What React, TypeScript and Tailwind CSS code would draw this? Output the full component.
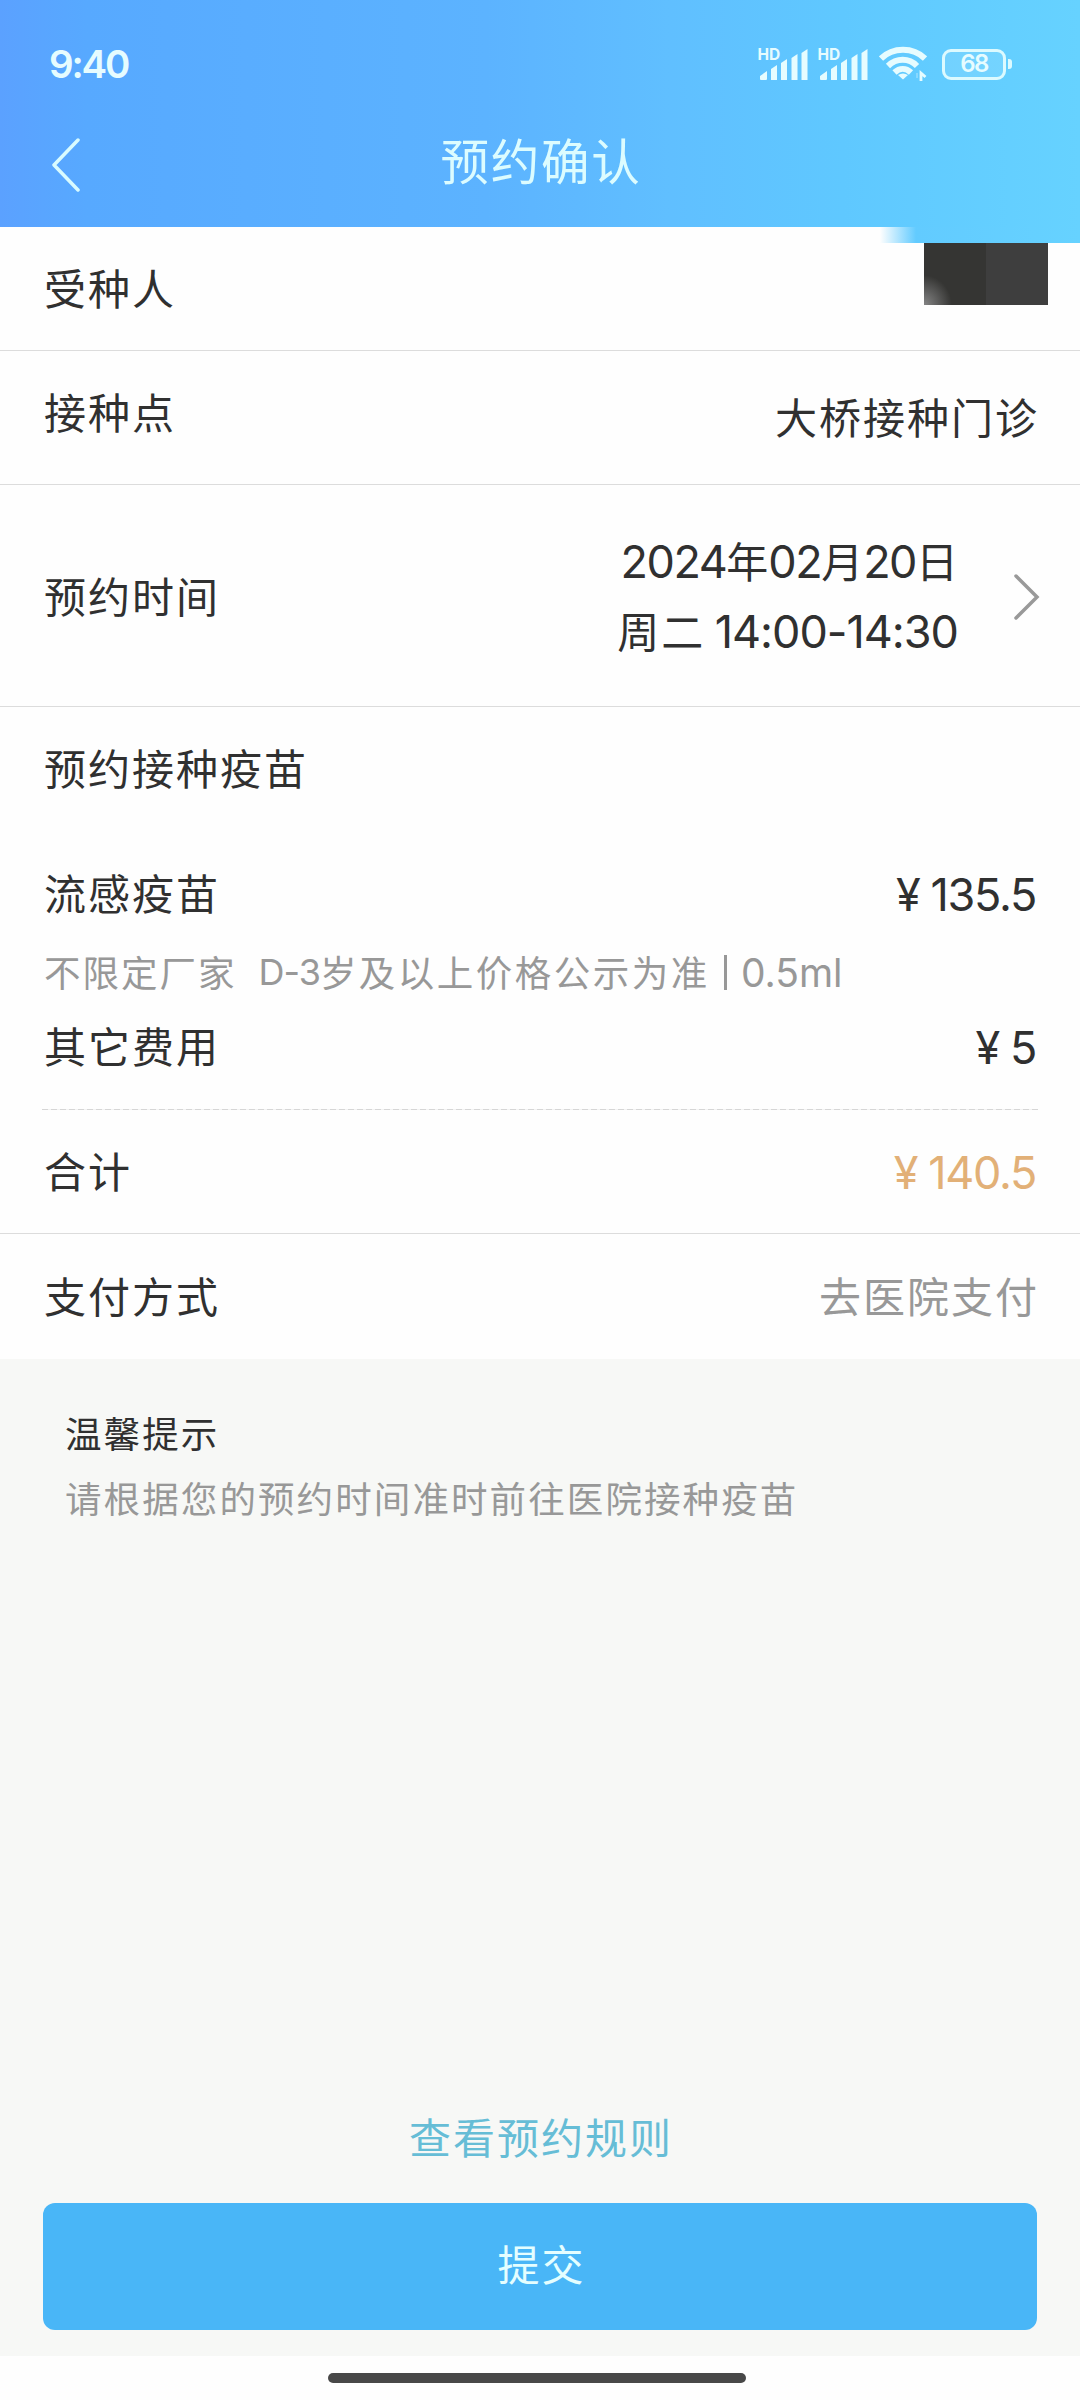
import type { ReactNode } from "react";

function Num({ children, className = "" }: { children: ReactNode; className?: string }) {
  return <span className={`font-[Inter] leading-none ${className}`}>{children}</span>;
}

function Signal() {
  return (
    <svg className="-mt-[6px] -mr-px -ml-[2px]" width="54" height="40" viewBox="-2 -6 54 40" fill="#e6fcff">
      <text x="-0.5" y="12.500" fontFamily="Inter" fontWeight="700" fontSize="15.5">HD</text>
      <path d="M2 32v-3l7-5v8a1 1 0 0 1-1 1H3a1 1 0 0 1-1-1zM13 33V22l6-4v15zM23 33V16l6-4v21zM33.500 33V11l6-4v26zM43.500 33V6l6-4v31z" />
    </svg>
  );
}

function Wifi() {
  return (
    <svg width="48" height="36" viewBox="0 0 48 36" fill="none" stroke="#e6fcff" strokeWidth="6">
      <path d="M2 12.500C14 .8 34 .8 46 12.500" />
      <path d="M9 20C17.500 11.800 30 11.800 38 20" />
      <path d="M15.500 26.500C20.500 21.700 27 21.700 32 26.500" />
      <path d="M24 33.500l-5-4.500q5-3 10 0z" fill="#e6fcff" stroke="none" />
      <path d="M42 35V27l4.500 4" strokeWidth="2.800" />
      <path d="M38 27v5" strokeWidth="1.200" opacity=".5" />
    </svg>
  );
}

function Battery() {
  return (
    <div className="flex items-center gap-[2px]">
      <div className="flex h-[31px] w-[64px] items-center justify-center rounded-[9px] border-[3px] border-[#dcfaff] bg-white/10">
        <span className="font-[Inter] text-[24px] leading-none font-semibold tracking-[-1.500px] text-[#e6fcff]">68</span>
      </div>
      <div className="h-[10px] w-[4px] rounded-r-[3px] bg-[#dcfaff]" />
    </div>
  );
}

function Header() {
  return (
    <header className="relative h-[227px] bg-[linear-gradient(90deg,#5ba1ff_0%,#57a9ff_8%,#5cb3ff_45%,#60bfff_62%,#5fc8ff_78%,#66d2ff_100%)]">
      <div className="flex h-[128px] items-center justify-between pr-[68px] pl-[49px]">
        <span className="font-[Inter] text-[38.500px] leading-none font-semibold tracking-[-2.200px] text-[#e6fcff]">9:40</span>
        <div className="flex items-center">
          <Signal />
          <div className="w-[9px]" />
          <Signal />
          <div className="w-[10px]" />
          <Wifi />
          <div className="w-[15px]" />
          <Battery />
        </div>
      </div>
      <div className="grid h-[74px] grid-cols-[100px_1fr_100px] items-center">
        <svg className="ml-[50px]" width="32" height="54" viewBox="0 0 32 54" fill="none" stroke="#d8fbff" strokeWidth="3.500" strokeLinecap="round" strokeLinejoin="round">
          <path d="M28 2L4 27l24 25" />
        </svg>
        <h1 className="pb-[11px] pl-[2px] text-center text-[48.500px] leading-none tracking-[1.800px] text-[#dcfcff]">预约确认</h1>
      </div>
      <div className="absolute top-[227px] right-0 h-[16px] w-[200px] bg-[linear-gradient(90deg,rgba(100,203,255,0)_0%,#62cbff_18%,#66d2ff_100%)]" />
    </header>
  );
}

function Row({ label, children, className = "" }: { label: string; children?: ReactNode; className?: string }) {
  return (
    <div className={`flex items-center justify-between px-[44px] ${className}`}>
      <span className="tracking-[2px]">{label}</span>
      {children}
    </div>
  );
}

function Price({ value, className = "" }: { value: string; className?: string }) {
  return (
    <span className={`mt-[4px] flex font-[Inter] text-[45px] leading-none tracking-[-1.300px] ${className}`}>
      <span className="mr-[11px]">¥</span>
      {value}
    </span>
  );
}

export default function App() {
  return (
    <div className="flex h-[2400px] w-[1080px] flex-col bg-[#f7f8f6] font-['Noto_Sans_CJK_SC',sans-serif] text-[42px] leading-none text-[#303030]">
      <Header />
      <main className="bg-[#fefefe]">
        <Row label="受种人" className="h-[124px] border-b border-[#dcdcdc] pb-[4px]">
          <div className="relative -mr-[12px] mb-[26px] h-[62px] w-[124px] bg-[linear-gradient(90deg,#353533_0%,#353533_50%,#3e3e3e_50%)]">
            <div className="absolute bottom-0 left-0 h-[30px] w-[28px] bg-[radial-gradient(ellipse_at_bottom_left,#858585_0%,transparent_70%)]" />
          </div>
        </Row>
        <div className="flex h-[134px] justify-between border-b border-[#dcdcdc] px-[44px] pt-[39px]">
          <span className="tracking-[2px]">接种点</span>
          <span className="mt-[5px] -mr-[3px] tracking-[2px]">大桥接种门诊</span>
        </div>
        <Row label="预约时间" className="h-[222px] border-b border-[#dcdcdc] pb-[2px]">
          <div className="-mr-[5px] flex items-center">
            <div className="text-right leading-[70px]">
              <p><Num className="text-[45px] tracking-[-1.500px]">2024</Num>年<Num className="text-[45px] tracking-[-1.500px]">02</Num>月<Num className="text-[45px] tracking-[-1.500px]">20</Num>日</p>
              <p><span className="tracking-[2px]">周二</span> <Num className="text-[45px] tracking-[-1px]">14:00-14:30</Num></p>
            </div>
            <svg className="mt-[5px] ml-[55px]" width="28" height="48" viewBox="0 0 28 48" fill="none" stroke="#999" strokeWidth="3.500" strokeLinecap="round">
              <path d="M3 3l21 21L3 45" />
            </svg>
          </div>
        </Row>
        <section>
          <Row label="预约接种疫苗" className="h-[124px] pb-[4px]" />
          <Row label="流感疫苗" className="mt-[18px] h-[90px] pb-[4px]">
            <Price value="135.5" />
          </Row>
          <p className="flex h-[68px] items-center px-[44px] pb-[2px] text-[36.500px] text-[#989898]">
            <span className="tracking-[2px]">不限定厂家</span>
            <span className="ml-[22px] font-[Inter] text-[36px] tracking-[-1px]">D-3</span>
            <span className="tracking-[2.500px]">岁及以上价格公示为准</span>
            <span className="mx-[14px] h-[35px] w-[3px] bg-[#989898]" />
            <span className="font-[Inter] text-[39px]">0.5ml</span>
          </p>
          <Row label="其它费用" className="h-[80px] pb-[4px]">
            <Price value="5" />
          </Row>
          <div className="mx-[42px] mt-[22px] h-px bg-[repeating-linear-gradient(90deg,#d6d6d6_0px,#d6d6d6_6px,#f3f3f3_6px,#f3f3f3_9px)]" />
          <Row label="合计" className="h-[124px] border-b border-[#dcdcdc] pb-[3px]">
            <Price value="140.5" className="text-[#e2b077]" />
          </Row>
        </section>
        <Row label="支付方式" className="h-[125px] pb-[4px]">
          <span className="-mr-[3px] tracking-[2px] text-[#989898]">去医院支付</span>
        </Row>
      </main>
      <section className="flex flex-col px-[65px] pt-[56px] text-[36.500px] tracking-[2.100px]">
        <h2 className="h-[65px]">温馨提示</h2>
        <p className="text-[#989898]">请根据您的预约时间准时前往医院接种疫苗</p>
      </section>
      <footer className="mt-auto">
        <a className="block pb-[46px] pl-[2px] text-center tracking-[2px] text-[#66bdd6]">查看预约规则</a>
        <button className="mx-[43px] block h-[127px] w-[994px] rounded-[12px] bg-[#49b6f7] pb-[7px] pl-[3px] text-center tracking-[2px] text-[#e4feff]">提交</button>
        <div className="mt-[26px] flex h-[44px] justify-center bg-[#fefefe] pt-[17px]">
          <div className="mr-[6px] h-[10px] w-[418px] rounded-full bg-[#484848]" />
        </div>
      </footer>
    </div>
  );
}
